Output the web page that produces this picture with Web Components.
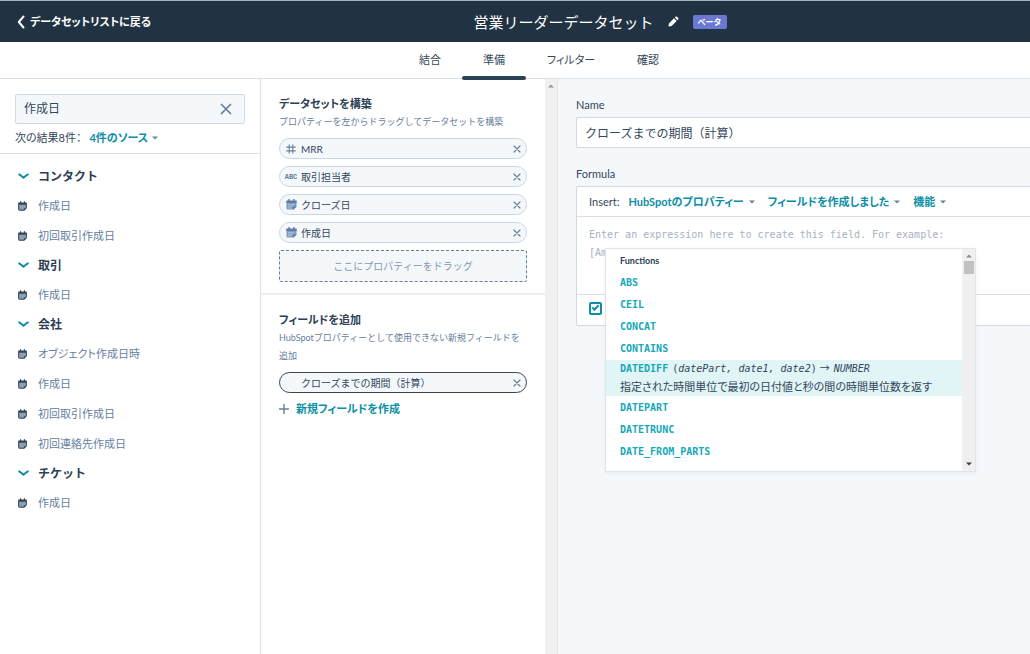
<!DOCTYPE html>
<html lang="ja">
<head>
<meta charset="utf-8">
<meta name="viewport" content="width=device-width, initial-scale=1">
<title>営業リーダーデータセット</title>
<style>
  :root {
    --navy: #213343;
    --ink: #33475b;
    --muted: #66809a;
    --teal: #0b8ea6;
    --teal-bright: #14a9b8;
    --line: #d9e0e8;
    --soft: #f4f8fb;
    --mono: "DejaVu Sans Mono", "Noto Sans CJK JP", monospace;
  }
  body {
    margin: 0;
    font: 11px/18px Lato, "Noto Sans CJK JP", sans-serif;
    font-feature-settings: "palt";
    color: var(--ink);
    background: #fff;
  }
</style>
</head>
<body>
<dataset-app></dataset-app>
<script>
  function define(name, html, setup) {
    const template = document.createElement('template');
    template.innerHTML = `<style>
      *, *::before, *::after { box-sizing: border-box; }
      :host { display: block; box-sizing: border-box; }
      button, input, textarea { font: inherit; color: inherit; font-feature-settings: inherit; margin: 0; }
      button { background: none; border: 0; padding: 0; display: inline-flex; align-items: center; }
      a { color: inherit; text-decoration: none; }
      ul { list-style: none; margin: 0; padding: 0; }
      h1, h2, h3, p { margin: 0; font-size: inherit; }
    </style>` + html;
    customElements.define(name, class extends HTMLElement {
      constructor() {
        super();
        this.attachShadow({ mode: 'open' }).append(template.content.cloneNode(true));
        if (setup) setup(this, this.shadowRoot);
      }
    });
  }

  const ICONS = {
    back: [8, 14, '<path d="M6.5 1.5 1.8 7l4.7 5.5" fill="none" stroke="currentColor" stroke-width="2" stroke-linecap="round" stroke-linejoin="round"/>'],
    pencil: [11, 11, '<path d="M.5 10.5l.4-3.1L6 2.3l2.7 2.6-5.1 5.2zM6.8 1.6l.8-.8q.8-.7 1.7.1l.8.8q.8.9.1 1.7l-.8.8z" fill="currentColor"/>'],
    close: [12, 12, '<path d="M1.5 1.5l9 9M10.5 1.5l-9 9" stroke="currentColor" stroke-width="1.7" stroke-linecap="round"/>'],
    remove: [8, 8, '<path d="M1 1l6 6M7 1L1 7" stroke="currentColor" stroke-width="1.2" stroke-linecap="round"/>'],
    chevron: [11, 7, '<path d="M1.2 1.4Q3.6 3 5.5 4.8 7.4 3 9.8 1.4" fill="none" stroke="currentColor" stroke-width="1.9" stroke-linecap="round" stroke-linejoin="round"/>'],
    caret: [6, 4, '<path d="M0 .5h6L3 3.6z" fill="currentColor"/>'],
    up: [6, 4, '<path d="M0 3.5h6L3 .4z" fill="currentColor"/>'],
    plus: [10, 10, '<path d="M5 .5v9M.5 5h9" stroke="currentColor" stroke-width="1.4" stroke-linecap="round"/>'],
    hash: [10, 10, '<path d="M3.2.5v9M6.8.5v9M.3 3.1h9.4M.3 6.9h9.4" stroke="currentColor" stroke-width="1.1"/>'],
    note: [9, 10, '<path d="M.3 2.4h8.4v4.8L6.4 9.5H.3z" fill="#8fa0b2"/><path d="M.7 3.2v5.1q0 .9.9.9h4.5l2.2-2.1V3.2" fill="none" stroke="currentColor"/><path d="M.2 1.6h8.6v2.1H.2zM2 .2h1.2V2H2zM5.8.2H7V2H5.8z" fill="currentColor"/><path d="M5.9 9.5V7.2h2.6z" fill="currentColor"/>'],
    calendar: [11, 11, '<path d="M.5 3.5h10v4.2L7.8 10.5H1.5q-1 0-1-1z" fill="#7f9ac0"/><path d="M.3 1.6h10.4v2.3H.3zM2.3 0h1.4v2H2.3zM7.3 0h1.4v2H7.3z" fill="#5c7ba6"/><path d="M2.2 5.4h6.6M2.2 7.2h5.4M2.2 9h3.2" stroke="#d3deeb" stroke-width=".8" stroke-dasharray="1.4 .7"/><path d="M7 10.6V7.4h3.6z" fill="#5c7ba6"/>']
  };
  define('ui-icon', '<style>:host{display:inline-flex;flex:none} svg{display:block}</style>', (host, root) => {
    const name = host.getAttribute('name');
    const [w, h, body] = ICONS[name] || ICONS.close;
    root.innerHTML += `<svg width="${w}" height="${h}" viewBox="0 0 ${w} ${h}" aria-hidden="true">${body}</svg>`;
  });

  define('app-header', `<style>
      :host { background: var(--navy); border-top: 1px solid #9db3c3; color: #fff; height: 42px;
        display: grid; grid-template-columns: 1fr auto 1fr; align-items: center; padding: 0 17px; }
      a { display: flex; align-items: center; gap: 5px; font-weight: 700; }
      div { display: flex; align-items: center; padding-left: 170px; }
      h1 { font-size: 15px; line-height: 24px; font-weight: 400; white-space: nowrap; font-feature-settings: normal; }
      button { margin: 0 14px; }
      span { background: #6a78d1; border-radius: 2px; font-size: 8px; line-height: 14px; padding: 0 5px; font-weight: 700; font-feature-settings: normal; }
    </style>
    <a href="#datasets"><ui-icon name="back"></ui-icon>データセットリストに戻る</a>
    <div><h1>営業リーダーデータセット</h1><button aria-label="名前を編集"><ui-icon name="pencil"></ui-icon></button><span>ベータ</span></div>`);

  define('app-tabs', `<style>
      :host { border-bottom: 1px solid var(--line); }
      nav { display: flex; justify-content: center; margin-left: 48px; }
      a { padding: 9px 21px; line-height: 18px; position: relative; }
      a[aria-current]::after { content: ""; position: absolute; left: 0; right: 0; bottom: -2px; height: 4px; border-radius: 2px; background: #2b4154; }
    </style>
    <nav><a href="#join">結合</a><a href="#prepare" aria-current="page">準備</a><a href="#filter">フィルター</a><a href="#review">確認</a></nav>`);

  define('search-box', `<style>
      :host { display: flex; align-items: center; height: 30px; border: 1px solid #cfdae5; border-radius: 2px; background: var(--soft); padding: 0 12px 0 8px; }
      input { flex: 1; min-width: 0; border: 0; background: none; padding: 0; font-size: 12px; outline: 0; font-feature-settings: normal; }
      button { color: #64809c; }
    </style>
    <input type="text" value="作成日" aria-label="プロパティーを検索"><button aria-label="クリア"><ui-icon name="close"></ui-icon></button>`);

  define('property-group', `<style>
      button { height: 29px; gap: 9px; font-size: 12px; font-weight: 700; color: #2b4054; font-feature-settings: normal; }
      ui-icon { color: var(--teal); }
    </style>
    <h3><button aria-expanded="true"><ui-icon name="chevron"></ui-icon><span id="t"></span></button></h3><slot></slot>`,
    (host, root) => { root.getElementById('t').textContent = host.getAttribute('label'); });

  define('property-item', `<style>
      :host { display: flex; align-items: center; height: 30px; gap: 11px; color: #6580a0; }
      ui-icon { color: #33475b; }
    </style><ui-icon name="note"></ui-icon><span><slot></slot></span>`);

  define('property-sidebar', `<style>
      :host { border-right: 1px solid var(--line); }
      header { padding: 15px 15px 6px; border-bottom: 1px solid var(--line); }
      p { display: flex; gap: 8px; padding-top: 5px; line-height: 18px; }
      p button { color: var(--teal); font-weight: 700; gap: 4px; }
      p ui-icon { color: #5f8ca2; }
      section { padding: 8px 18px; }
    </style>
    <header><search-box></search-box>
      <p><span>次の結果8件：</span><button>4件のソース<ui-icon name="caret"></ui-icon></button></p></header>
    <section>
      <property-group label="コンタクト"><property-item>作成日</property-item><property-item>初回取引作成日</property-item></property-group>
      <property-group label="取引"><property-item>作成日</property-item></property-group>
      <property-group label="会社"><property-item>オブジェクト作成日時</property-item><property-item>作成日</property-item><property-item>初回取引作成日</property-item><property-item>初回連絡先作成日</property-item></property-group>
      <property-group label="チケット"><property-item>作成日</property-item></property-group>
    </section>`);

  define('property-chip', `<style>
      :host { display: flex; align-items: center; height: 21px; border: 1px solid #c9d6e4; border-radius: 11px; background: var(--soft); padding: 0 5px; font-size: 10px; font-feature-settings: normal; }
      :host([selected]) { border-color: #3c444c; }
      i { width: 12px; margin-right: 4px; display: flex; justify-content: center; font-style: normal; color: #64809f; }
      b { font: 700 7px/8px "Liberation Mono", monospace; }
      span { flex: 1; }
      button { color: #64809c; }
    </style><i></i><span><slot></slot></span><button aria-label="削除"><ui-icon name="remove"></ui-icon></button>`,
    (host, root) => {
      const kind = host.getAttribute('kind');
      if (kind === 'text') root.querySelector('i').innerHTML = '<b>ABC</b>';
      else if (kind) root.querySelector('i').innerHTML = `<ui-icon name="${kind}"></ui-icon>`;
    });

  define('dataset-builder', `<style>
      :host { display: flex; }
      main { flex: 1; min-width: 0; }
      section { padding: 16px 18px 11px; }
      section + section { border-top: 2px solid #ebeef0; }
      h2 { line-height: 18px; color: #2b4054; }
      p { font-size: 9px; line-height: 18px; color: var(--muted); font-feature-settings: normal; }
      .chips { display: grid; gap: 7px; padding-top: 7px; }
      .drop { border: 1px dashed #5f7f9c; border-radius: 2px; background: var(--soft); height: 32px; display: grid; place-items: center; color: #8298b0; font-size: 10px; font-feature-settings: normal; }
      .new { color: var(--teal); font-weight: 700; gap: 7px; line-height: 18px; }
      .new ui-icon { color: #64809c; }
      .bar { width: 13px; background: #f0f0f0; border-right: 1px solid #e2e6ea; display: flex; justify-content: center; padding-top: 5px; color: #989898; }
    </style>
    <main>
      <section><h2>データセットを構築</h2><p>プロパティーを左からドラッグしてデータセットを構築</p>
        <div class="chips"><property-chip kind="hash">MRR</property-chip><property-chip kind="text">取引担当者</property-chip><property-chip kind="calendar">クローズ日</property-chip><property-chip kind="calendar">作成日</property-chip><div class="drop">ここにプロパティーをドラッグ</div></div></section>
      <section><h2>フィールドを追加</h2><p>HubSpotプロパティーとして使用できない新規フィールドを追加</p>
        <div class="chips"><property-chip selected>クローズまでの期間（計算）</property-chip><button class="new"><ui-icon name="plus"></ui-icon>新規フィールドを作成</button></div></section>
    </main>
    <div class="bar"><ui-icon name="up"></ui-icon></div>`);

  define('function-menu', `<style>
      :host { display: flex; background: #fff; border: 1px solid #dfe5eb; box-shadow: 0 1px 3px rgba(45,62,80,.08); height: 224px; }
      div { flex: 1; min-width: 0; }
      h3 { font-size: 9px; line-height: 23px; padding-left: 14px; color: #2b4054; }
      li { line-height: 18px; padding: 2px 14px; font-family: var(--mono); font-size: 10px; white-space: nowrap; color: var(--teal-bright); }
      li[aria-selected] { background: #e1f4f6; padding: 0 14px; color: var(--ink); margin-bottom: 1px; }
      li[aria-selected] b { color: var(--teal-bright); margin-right: 4px; }
      .returns { font-family: "Noto Sans CJK JP", sans-serif; line-height: 1; margin: 0 4px 0 3px; font-feature-settings: normal; }
      p { font: 11px/18px Lato, "Noto Sans CJK JP", sans-serif; font-feature-settings: inherit; }
      aside { width: 13px; background: #f0f0f0; display: flex; flex-direction: column; align-items: center; padding: 5px 0; color: #8a8a8a; }
      aside span { width: 10px; height: 13px; margin: 3px 0 auto; background: #c1c1c1; }
      aside ui-icon:last-child { color: #3c3c3c; }
    </style>
    <div><h3>Functions</h3>
    <ul role="listbox" aria-label="Functions">
      <li role="option"><b>ABS</b></li><li role="option"><b>CEIL</b></li><li role="option"><b>CONCAT</b></li><li role="option"><b>CONTAINS</b></li>
      <li role="option" aria-selected="true"><b>DATEDIFF</b>(<i>datePart, date1, date2</i>)<span class="returns">→</span><i>NUMBER</i><p>指定された時間単位で最初の日付値と秒の間の時間単位数を返す</p></li>
      <li role="option"><b>DATEPART</b></li><li role="option"><b>DATETRUNC</b></li><li role="option"><b>DATE_FROM_PARTS</b></li>
    </ul></div>
    <aside><ui-icon name="up"></ui-icon><span></span><ui-icon name="caret"></ui-icon></aside>`);

  define('formula-editor', `<style>
      :host { position: relative; border: 1px solid #cfdae5; border-right: 0; border-radius: 2px 0 0 2px; background: #fff; }
      header { display: flex; align-items: center; height: 30px; padding: 0 12px; gap: 13px; border-bottom: 1px solid var(--line); white-space: nowrap; }
      header button { color: var(--teal); font-weight: 700; gap: 5px; }
      header ui-icon { color: #64809c; }
      header span { margin-right: -4px; }
      textarea { display: block; width: 100%; height: 77px; border: 0; outline: 0; resize: none; padding: 9px 12px; background: none; font: 10px/18px var(--mono); }
      textarea::placeholder { color: #a5b3c4; opacity: 1; }
      footer { border-top: 1px solid var(--line); height: 31px; padding: 0 12px 4px; display: flex; align-items: center; }
      input { appearance: none; width: 13px; height: 13px; border: 2px solid var(--teal); border-radius: 2px; display: grid; place-items: center; }
      input:checked::before { content: ""; width: 7px; height: 4px; border: solid var(--teal); border-width: 0 0 2px 2px; transform: translateY(-1px) rotate(-45deg); }
      function-menu { position: absolute; left: 28px; top: 61px; width: 371px; z-index: 1; }
    </style>
    <header><span>Insert:</span><button>HubSpotのプロパティー<ui-icon name="caret"></ui-icon></button><button>フィールドを作成しました<ui-icon name="caret"></ui-icon></button><button>機能<ui-icon name="caret"></ui-icon></button></header>
    <textarea id="formula" aria-label="Formula" placeholder="Enter an expression here to create this field. For example:&#10;[Am"></textarea>
    <footer><input type="checkbox" checked aria-label="Format"></footer>
    <function-menu></function-menu>`);

  define('field-panel', `<style>
      :host { background: var(--soft); padding: 17px 0 17px 18px; min-width: 0; }
      label, h2 { display: block; line-height: 18px; padding-bottom: 3px; font-weight: 400; }
      input { display: block; width: 100%; height: 31px; border: 1px solid #cfdae5; border-right: 0; border-radius: 2px 0 0 2px; padding: 0 8px; background: #fff; font-size: 12px; margin-bottom: 17px; outline: 0; font-feature-settings: normal; }
    </style>
    <label for="name">Name</label><input id="name" type="text" value="クローズまでの期間（計算）">
    <h2>Formula</h2><formula-editor></formula-editor>`);

  define('dataset-app', `<style>
      :host { display: flex; flex-direction: column; min-height: 100vh; }
      .work { flex: 1; display: grid; grid-template-columns: 261px 297px minmax(0, 1fr); }
    </style>
    <app-header></app-header><app-tabs></app-tabs>
    <div class="work"><property-sidebar></property-sidebar><dataset-builder></dataset-builder><field-panel></field-panel></div>`);
</script>
</body>
</html>
